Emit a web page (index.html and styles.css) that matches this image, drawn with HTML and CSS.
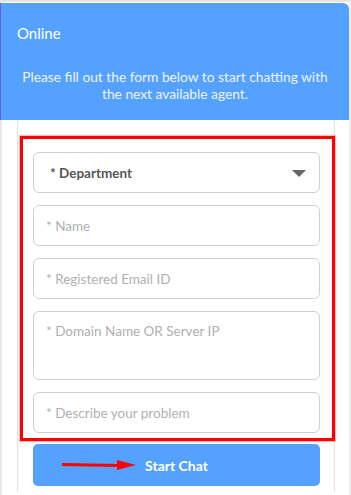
FILE: index.html
```html
<!DOCTYPE html>
<html>
<head>
<meta charset="utf-8">
<link rel="stylesheet" href="styles.css">
</head>
<body>
<div class="widget">
  <div class="header">
    <div class="status">Online</div>
    <p class="intro">Please fill out the form below to start chatting with the next available agent.</p>
  </div>
  <div class="body">
    <form class="form">
      <div class="field select">
        <span class="select-label">* Department</span>
        <span class="caret"></span>
      </div>
      <div class="field"><span class="ph">* Name</span></div>
      <div class="field"><span class="ph">* Registered Email ID</span></div>
      <div class="field area"><span class="ph">* Domain Name OR Server IP</span></div>
      <div class="field"><span class="ph">* Describe your problem</span></div>
      <div class="button">Start Chat</div>
    </form>
    <div class="highlight"></div>
    <svg class="arrow" width="80" height="14" viewBox="0 0 80 14">
      <line x1="1" y1="6.5" x2="58" y2="7.5" stroke="#f00" stroke-width="3"/>
      <polygon points="56,2 75,7 56,12" fill="#f00"/>
    </svg>
  </div>
</div>
</body>
</html>
```

FILE: styles.css
```css
* { box-sizing: border-box; }
html, body { margin: 0; padding: 0; background: #fff; }
body {
  font-family: Lato, "Open Sans", sans-serif;
  width: 351px;
  height: 495px;
  overflow: hidden;
}
.widget {
  width: 351px;
  height: 495px;
  border-top: 2px solid #e4e4e4;
  border-left: 2px solid #e6e8ee;
  border-right: 2px solid #eceef0;
  position: relative;
}
.header {
  margin-top: 1px;
  background: #55a1ff;
  height: 117px;
  border-top-right-radius: 6px;
  border-left: 1px solid #6c5fd6;
  margin-left: -2px;
  padding: 20px 16px 0 16px;
  color: #fff;
}
.status {
  font-size: 15px;
  line-height: 20px;
}
.intro {
  margin: 25px 0 0;
  font-size: 13.75px;
  line-height: 17px;
  text-align: center;
  color: #f0f4ff;
}
.body {
  position: relative;
  margin: 0 14px 0 15px;
  height: 372px;
  border-left: 1px solid #e2e2e2;
  border-right: 1px solid #e2e2e2;
  padding: 32px 14px 0 15px;
}
.form {
  display: flex;
  flex-direction: column;
}
.field {
  height: 41px;
  margin-bottom: 12px;
  border: 1.5px solid #d0d0d0;
  border-radius: 6px;
  padding: 0 12px;
  display: flex;
  align-items: center;
  font-size: 13.5px;
}
.field.area {
  height: 69px;
  align-items: flex-start;
  padding-top: 11px;
}
.field:nth-child(5) { margin-bottom: 11px; }
.ph { color: #b0b0b0; }
.select { padding: 0 13px 0 16px; justify-content: space-between; }
.select-label { color: #555; font-weight: bold; font-size: 13.5px; }
.caret {
  width: 0; height: 0;
  border-left: 7px solid transparent;
  border-right: 7px solid transparent;
  border-top: 7px solid #666;
  margin-top: 1px;
}
.button {
  height: 42px;
  background: #55a1ff;
  border-radius: 5px;
  color: #fff;
  font-weight: bold;
  font-size: 14px;
  display: flex;
  align-items: center;
  justify-content: center;
}
.highlight {
  position: absolute;
  left: 2px;
  top: 16px;
  width: 315px;
  height: 305px;
  border: 3px solid #f00;
  box-shadow: 0 0 1px 1px rgba(255,120,120,0.5);
  pointer-events: none;
}
.arrow {
  position: absolute;
  left: 43px;
  top: 338px;
}
```
